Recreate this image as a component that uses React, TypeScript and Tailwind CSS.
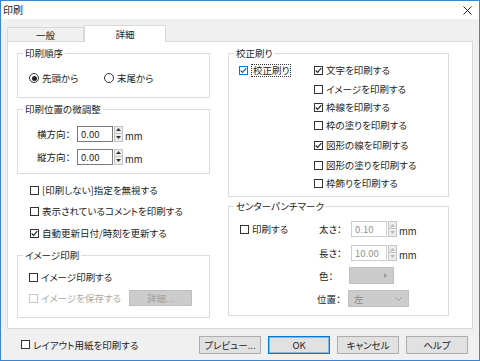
import type { ReactNode } from 'react'

function CheckBox({
  label,
  checked = false,
  disabled = false,
  focus = false,
}: {
  label: string
  checked?: boolean
  disabled?: boolean
  focus?: boolean
}) {
  const box = focus ? 'border-[#0078d7]' : disabled ? 'border-[#c6c6c6]' : 'border-[#333333]'
  return (
    <div className="flex items-center h-[14px]">
      <span className={`w-[9px] h-[9px] shrink-0 border bg-white flex items-center justify-center ${box}`}>
        {checked && (
          <svg width="7" height="7" viewBox="0 0 7 7">
            <path
              d="M0.7 3.5 L2.6 5.4 L6.3 1.1"
              fill="none"
              stroke={focus ? '#0a5aa8' : '#222222'}
              strokeWidth="1.1"
            />
          </svg>
        )}
      </span>
      <span
        className={`ml-[3px] whitespace-nowrap ${disabled ? 'text-[#a8a8a8]' : ''} ${
          focus ? 'border border-dotted border-[#333] px-[1px] leading-[11px]' : ''
        }`}
      >
        {label}
      </span>
    </div>
  )
}

function Radio({ label, checked = false }: { label: string; checked?: boolean }) {
  return (
    <div className="flex items-center h-[14px]">
      <span className="w-[10px] h-[10px] rounded-full border border-[#333333] bg-white flex items-center justify-center">
        {checked && <span className="w-[5px] h-[5px] rounded-full bg-[#222]" />}
      </span>
      <span className="ml-[3px] whitespace-nowrap">{label}</span>
    </div>
  )
}

function Group({ title, className, children }: { title: string; className: string; children?: ReactNode }) {
  return (
    <div className={`border border-[#dcdcdc] ${className}`}>
      <div className="-mt-[7px] ml-[5px] w-fit bg-white px-[2px] leading-[12px] whitespace-nowrap">{title}</div>
      {children}
    </div>
  )
}

function Spin({ disabled = false }: { disabled?: boolean }) {
  const c = disabled ? '#b8b8b8' : '#333333'
  return (
    <div className="ml-[1px] flex flex-col w-[9px] h-[16px]">
      <span className="h-[8px] border border-[#c4c4c4] bg-[#eeeeee] flex items-center justify-center">
        <svg width="5" height="3" viewBox="0 0 5 3">
          <polygon points="2.5,0 5,3 0,3" fill={c} />
        </svg>
      </span>
      <span className="h-[8px] border border-t-0 border-[#c4c4c4] bg-[#eeeeee] flex items-center justify-center">
        <svg width="5" height="3" viewBox="0 0 5 3">
          <polygon points="0,0 5,0 2.5,3" fill={c} />
        </svg>
      </span>
    </div>
  )
}

function NumField({ value, disabled = false }: { value: string; disabled?: boolean }) {
  return (
    <div className="flex items-center">
      <div
        className={`w-[36px] h-[16px] border bg-white pl-[3px] flex items-center ${
          disabled ? 'border-[#cccccc] text-[#8e8e8e]' : 'border-[#7a7a7a]'
        }`}
      >
        {value}
      </div>
      <Spin disabled={disabled} />
      <span className="ml-[2px] self-end leading-[11px]">mm</span>
    </div>
  )
}

function Button({ label, primary = false }: { label: string; primary?: boolean }) {
  return (
    <div
      className={`w-[62px] h-[18px] flex items-center justify-center bg-[#e1e1e1] border ${
        primary ? 'border-[#0078d7] ring-1 ring-inset ring-[#0078d7]/40' : 'border-[#adadad]'
      }`}
    >
      {label}
    </div>
  )
}

const proofItems = [
  { label: '文字を印刷する', checked: true, m: 'mt-0' },
  { label: 'イメージを印刷する', checked: false, m: 'mt-[5px]' },
  { label: '枠線を印刷する', checked: true, m: 'mt-[4px]' },
  { label: '枠の塗りを印刷する', checked: false, m: 'mt-[4px]' },
  { label: '図形の線を印刷する', checked: true, m: 'mt-[6px]' },
  { label: '図形の塗りを印刷する', checked: false, m: 'mt-[6px]' },
  { label: '枠飾りを印刷する', checked: false, m: 'mt-[4px]' },
]

export default function App() {
  return (
    <div className="w-[480px] h-[361px] bg-[#f0f0f0] border border-[#3b86d1] flex flex-col text-[9.5px] leading-[12px] text-[#222222] font-['Noto_Sans_CJK_JP','Noto_Sans',sans-serif] [font-feature-settings:'palt']">
      {/* Title bar */}
      <div className="h-[18px] bg-white flex items-center justify-between pl-[2px] pr-[7px]">
        <span className="text-[10px]">印刷</span>
        <svg width="9" height="9" viewBox="0 0 9 9">
          <path d="M0.5 0.5 L8.5 8.5 M8.5 0.5 L0.5 8.5" stroke="#222" strokeWidth="1" />
        </svg>
      </div>

      {/* Tabs */}
      <div className="mt-[6px] ml-[6px] h-[16px] flex items-end">
        <div className="w-[77px] h-[14px] border border-b-0 border-[#d9d9d9] bg-[#f0f0f0] flex items-center justify-center">
          一般
        </div>
        <div className="relative z-10 -mb-px w-[82px] h-[17px] border border-b-0 border-[#d9d9d9] bg-white flex items-center justify-center">
          詳細
        </div>
      </div>

      {/* Panel */}
      <div className="mx-[6px] h-[288px] bg-white border border-[#d9d9d9] flex pl-[9px] gap-[18px]">
        {/* Left column */}
        <div className="w-[193px] flex flex-col pt-[11px]">
          <Group title="印刷順序" className="h-[45px]">
            <div className="mt-[12px] pl-[11px] flex">
              <div className="w-[75px]">
                <Radio label="先頭から" checked />
              </div>
              <Radio label="末尾から" />
            </div>
          </Group>

          <Group title="印刷位置の微調整" className="mt-[11px] h-[65px]">
            <div className="mt-[10px] pl-[19px] flex items-center h-[17px]">
              <span className="w-[40px]">横方向：</span>
              <NumField value="0.00" />
            </div>
            <div className="mt-[6px] pl-[19px] flex items-center h-[17px]">
              <span className="w-[40px]">縦方向：</span>
              <NumField value="0.00" />
            </div>
          </Group>

          <div className="mt-[9px] pl-[13px]">
            <CheckBox label="[印刷しない]指定を無視する" />
          </div>
          <div className="mt-[7px] pl-[13px]">
            <CheckBox label="表示されているコメントを印刷する" />
          </div>
          <div className="mt-[8px] pl-[13px]">
            <CheckBox label="自動更新日付/時刻を更新する" checked />
          </div>

          <Group title="イメージ印刷" className="mt-[15px] h-[63px]">
            <div className="mt-[9px] pl-[11px]">
              <CheckBox label="イメージ印刷する" />
            </div>
            <div className="mt-[6px] pl-[11px] flex items-center h-[16px]">
              <div className="w-[100px]">
                <CheckBox label="イメージを保存する" disabled />
              </div>
              <div className="w-[63px] h-[16px] bg-[#cccccc] border border-[#bfbfbf] text-[#a0a0a0] flex items-center justify-center">
                詳細...
              </div>
            </div>
          </Group>
        </div>

        {/* Right column */}
        <div className="w-[221px] flex flex-col pt-[11px]">
          <Group title="校正刷り" className="h-[144px]">
            <div className="mt-[4px] pl-[10px] flex">
              <div className="w-[75px]">
                <CheckBox label="校正刷り" checked focus />
              </div>
              <div className="flex flex-col">
                {proofItems.map((item) => (
                  <div key={item.label} className={item.m}>
                    <CheckBox label={item.label} checked={item.checked} />
                  </div>
                ))}
              </div>
            </div>
          </Group>

          <Group title="センターパンチマーク" className="mt-[9px] h-[110px]">
            <div className="mt-[9px] pl-[11px] flex">
              <div className="w-[79px] h-[16px] flex items-center">
                <CheckBox label="印刷する" />
              </div>
              <div className="flex flex-col">
                <div className="flex items-center h-[16px]">
                  <span className="w-[32px]">太さ：</span>
                  <NumField value="0.10" disabled />
                </div>
                <div className="mt-[8px] flex items-center h-[16px]">
                  <span className="w-[32px]">長さ：</span>
                  <NumField value="10.00" disabled />
                </div>
                <div className="mt-[6px] flex items-center h-[17px]">
                  <span className="w-[30px]">色：</span>
                  <div className="w-[45px] h-[17px] bg-[#cccccc] border border-[#bfbfbf] flex items-center justify-end pr-[6px]">
                    <svg width="3" height="5" viewBox="0 0 3 5">
                      <polygon points="0,0 3,2.5 0,5" fill="#9a9a9a" />
                    </svg>
                  </div>
                </div>
                <div className="mt-[6px] flex items-center h-[17px]">
                  <span className="w-[31px] -ml-[2px]">位置：</span>
                  <div className="w-[61px] h-[17px] bg-[#cccccc] border border-[#bfbfbf] text-[#8a8a8a] flex items-center justify-between pl-[5px] pr-[6px]">
                    <span>左</span>
                    <svg width="7" height="4" viewBox="0 0 7 4">
                      <path d="M0.5 0.5 L3.5 3.5 L6.5 0.5" fill="none" stroke="#9a9a9a" strokeWidth="1" />
                    </svg>
                  </div>
                </div>
              </div>
            </div>
          </Group>
        </div>
      </div>

      {/* Bottom bar */}
      <div className="flex-1 flex items-center pl-[20px] pr-[11px]">
        <CheckBox label="レイアウト用紙を印刷する" />
        <div className="ml-auto flex gap-[7px]">
          <Button label="プレビュー..." />
          <Button label="OK" primary />
          <Button label="キャンセル" />
          <Button label="ヘルプ" />
        </div>
      </div>
    </div>
  )
}
